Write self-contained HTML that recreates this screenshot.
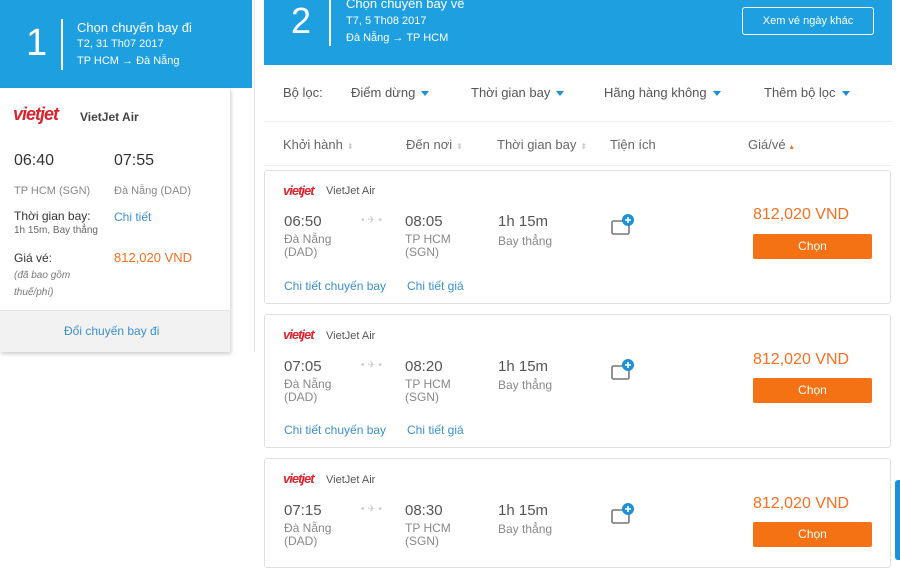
<!DOCTYPE html>
<html><head><meta charset="utf-8"><style>
*{margin:0;padding:0;box-sizing:border-box}
body{width:900px;height:560px;overflow:hidden;background:#fff;font-family:"Liberation Sans","Noto Sans CJK SC",sans-serif;position:relative;color:#333}
.a{position:absolute;white-space:nowrap}
.blue{background:#1ea0e0;color:#fff}
.logo{font-family:"Liberation Sans",sans-serif;font-style:italic;font-weight:bold;color:#d8262e;letter-spacing:-1px}
.card{position:absolute;left:264px;width:627px;height:134px;border:1px solid #e0e0e0;border-radius:3px;background:#fff}
.card .a{position:absolute}
.t{font-size:15px;color:#555}
.s{font-size:12px;color:#888;line-height:13px}
.lnk{font-size:12px;color:#3a8fd0}
.price{font-size:16px;color:#f36f21}
.btn{background:#f47214;color:#fff;font-size:12px;text-align:center;line-height:25px;border-radius:2px;width:119px;height:25px}
.caret{display:inline-block;width:0;height:0;border-left:4px solid transparent;border-right:4px solid transparent;border-top:5px solid #1e90d8;margin-left:6px;vertical-align:middle}
.sort{color:#ccc;font-size:8px;margin-left:4px}
</style></head><body>
<div class="a blue" style="left:0;top:0;width:252px;height:88px"></div>
<div class="a" style="left:26px;top:22px;font-size:38px;color:#fff;font-weight:300">1</div>
<div class="a" style="left:61px;top:19px;width:2px;height:51px;background:#fff"></div>
<div class="a" style="left:77px;top:20px;font-size:13px;color:#fff">Chọn chuyến bay đi</div>
<div class="a" style="left:77px;top:38px;font-size:11px;color:#fff">T2, 31 Th07 2017</div>
<div class="a" style="left:77px;top:55px;font-size:11px;color:#fff">TP HCM → Đà Nẵng</div>

<div class="a" style="left:0;top:88px;width:230px;height:264px;background:#fff;box-shadow:1px 2px 4px rgba(0,0,0,.2)"></div>
<div class="a logo" style="left:13px;top:104px;font-size:18px">vietjet</div>
<div class="a" style="left:80px;top:110px;font-size:12px;color:#444;font-weight:bold">VietJet Air</div>
<div class="a" style="left:14px;top:152px;font-size:16px;color:#333">06:40</div>
<div class="a" style="left:114px;top:152px;font-size:16px;color:#333">07:55</div>
<div class="a" style="left:14px;top:185px;font-size:11px;color:#888">TP HCM (SGN)</div>
<div class="a" style="left:114px;top:185px;font-size:11px;color:#888">Đà Nẵng (DAD)</div>
<div class="a" style="left:14px;top:209px;font-size:12px;color:#333">Thời gian bay:</div>
<div class="a" style="left:14px;top:225px;font-size:10px;color:#666">1h 15m, Bay thẳng</div>
<div class="a" style="left:114px;top:210px;font-size:12px;color:#3a8fd0">Chi tiết</div>
<div class="a" style="left:14px;top:251px;font-size:12px;color:#333">Giá vé:</div>
<div class="a" style="left:14px;top:267px;font-size:10px;color:#777;font-style:italic;line-height:17px;white-space:normal;width:80px">(đã bao gồm thuế/phí)</div>
<div class="a" style="left:114px;top:250px;font-size:13px;color:#f36f21">812,020 VND</div>
<div class="a" style="left:0;top:310px;width:230px;height:42px;background:#f2f2f2;border-top:1px solid #e4e4e4"></div>
<div class="a" style="left:64px;top:324px;font-size:12px;color:#3a8fd0">Đổi chuyến bay đi</div>

<div class="a" style="left:254px;top:0;width:1px;height:352px;background:#e6e6e6"></div>

<div class="a blue" style="left:264px;top:0;width:628px;height:65px"></div>
<div class="a" style="left:291px;top:0px;font-size:36px;color:#fff">2</div>
<div class="a" style="left:329px;top:0;width:2px;height:46px;background:#fff"></div>
<div class="a" style="left:346px;top:-4px;font-size:13px;color:#fff">Chọn chuyến bay về</div>
<div class="a" style="left:346px;top:15px;font-size:11px;color:#fff">T7, 5 Th08 2017</div>
<div class="a" style="left:346px;top:32px;font-size:11px;color:#fff">Đà Nẵng → TP HCM</div>
<div class="a" style="left:742px;top:7px;width:132px;height:28px;border:1px solid #fff;border-radius:3px;color:#fff;font-size:11px;text-align:center;line-height:26px">Xem vé ngày khác</div>

<div class="a" style="left:283px;top:85px;font-size:13px;color:#555">Bộ lọc:</div>
<div class="a" style="left:351px;top:85px;font-size:13px;color:#555">Điểm dừng<span class="caret"></span></div>
<div class="a" style="left:471px;top:85px;font-size:13px;color:#555">Thời gian bay<span class="caret"></span></div>
<div class="a" style="left:604px;top:85px;font-size:13px;color:#555">Hãng hàng không<span class="caret"></span></div>
<div class="a" style="left:764px;top:85px;font-size:13px;color:#555">Thêm bộ lọc<span class="caret"></span></div>
<div class="a" style="left:264px;top:121px;width:628px;height:1px;background:#eee"></div>
<div class="a" style="left:283px;top:137px;font-size:13px;color:#666">Khởi hành<span class="sort">⬍</span></div>
<div class="a" style="left:406px;top:137px;font-size:13px;color:#666">Đến nơi<span class="sort">⬍</span></div>
<div class="a" style="left:497px;top:137px;font-size:13px;color:#666">Thời gian bay<span class="sort">⬍</span></div>
<div class="a" style="left:610px;top:137px;font-size:13px;color:#666">Tiện ích</div>
<div class="a" style="left:748px;top:137px;font-size:13px;color:#666">Giá/vé<span class="sort" style="color:#f36f21">▴</span></div>
<div class="a" style="left:264px;top:165px;width:628px;height:1px;background:#eee"></div>

<div class="card" style="top:170px">
<div class="a logo" style="left:18px;top:12px;font-size:13px">vietjet</div>
<div class="a" style="left:61px;top:14px;font-size:11px;color:#555">VietJet Air</div>
<div class="a t" style="left:19px;top:42px">06:50</div>
<div class="a" style="left:96px;top:44px;font-size:10px;color:#ccc">• ✈ •</div>
<div class="a t" style="left:140px;top:42px">08:05</div>
<div class="a t" style="left:233px;top:42px">1h 15m</div>
<div class="a s" style="left:19px;top:62px">Đà Nẵng<br>(DAD)</div>
<div class="a s" style="left:140px;top:62px">TP HCM<br>(SGN)</div>
<div class="a s" style="left:233px;top:64px">Bay thẳng</div>
<svg class="a" style="left:346px;top:42px" width="24" height="24" viewBox="0 0 24 24"><rect x="1" y="8" width="17" height="13" rx="1.5" fill="none" stroke="#777" stroke-width="1.6"/><circle cx="17" cy="7" r="6" fill="#1e90d8"/><path d="M17 4v6M14 7h6" stroke="#fff" stroke-width="1.6"/></svg>
<div class="a price" style="left:488px;top:35px">812,020 VND</div>
<div class="a btn" style="left:488px;top:63px">Chọn</div>
<div class="a lnk" style="left:19px;top:108px">Chi tiết chuyến bay</div>
<div class="a lnk" style="left:142px;top:108px">Chi tiết giá</div>
</div>

<div class="card" style="top:314px">
<div class="a logo" style="left:18px;top:12px;font-size:13px">vietjet</div>
<div class="a" style="left:61px;top:15px;font-size:11px;color:#555">VietJet Air</div>
<div class="a t" style="left:19px;top:43px">07:05</div>
<div class="a" style="left:96px;top:45px;font-size:10px;color:#ccc">• ✈ •</div>
<div class="a t" style="left:140px;top:43px">08:20</div>
<div class="a t" style="left:233px;top:43px">1h 15m</div>
<div class="a s" style="left:19px;top:63px">Đà Nẵng<br>(DAD)</div>
<div class="a s" style="left:140px;top:63px">TP HCM<br>(SGN)</div>
<div class="a s" style="left:233px;top:64px">Bay thẳng</div>
<svg class="a" style="left:346px;top:43px" width="24" height="24" viewBox="0 0 24 24"><rect x="1" y="8" width="17" height="13" rx="1.5" fill="none" stroke="#777" stroke-width="1.6"/><circle cx="17" cy="7" r="6" fill="#1e90d8"/><path d="M17 4v6M14 7h6" stroke="#fff" stroke-width="1.6"/></svg>
<div class="a price" style="left:488px;top:36px">812,020 VND</div>
<div class="a btn" style="left:488px;top:63px">Chọn</div>
<div class="a lnk" style="left:19px;top:108px">Chi tiết chuyến bay</div>
<div class="a lnk" style="left:142px;top:108px">Chi tiết giá</div>
</div>

<div class="card" style="top:458px;height:110px">
<div class="a logo" style="left:18px;top:12px;font-size:13px">vietjet</div>
<div class="a" style="left:61px;top:15px;font-size:11px;color:#555">VietJet Air</div>
<div class="a t" style="left:19px;top:43px">07:15</div>
<div class="a" style="left:96px;top:45px;font-size:10px;color:#ccc">• ✈ •</div>
<div class="a t" style="left:140px;top:43px">08:30</div>
<div class="a t" style="left:233px;top:43px">1h 15m</div>
<div class="a s" style="left:19px;top:63px">Đà Nẵng<br>(DAD)</div>
<div class="a s" style="left:140px;top:63px">TP HCM<br>(SGN)</div>
<div class="a s" style="left:233px;top:64px">Bay thẳng</div>
<svg class="a" style="left:346px;top:43px" width="24" height="24" viewBox="0 0 24 24"><rect x="1" y="8" width="17" height="13" rx="1.5" fill="none" stroke="#777" stroke-width="1.6"/><circle cx="17" cy="7" r="6" fill="#1e90d8"/><path d="M17 4v6M14 7h6" stroke="#fff" stroke-width="1.6"/></svg>
<div class="a price" style="left:488px;top:36px">812,020 VND</div>
<div class="a btn" style="left:488px;top:63px">Chọn</div>
</div>
<div class="a" style="left:895px;top:480px;width:5px;height:80px;background:#1e90d8;border-radius:3px 0 0 3px"></div>
</body></html>
